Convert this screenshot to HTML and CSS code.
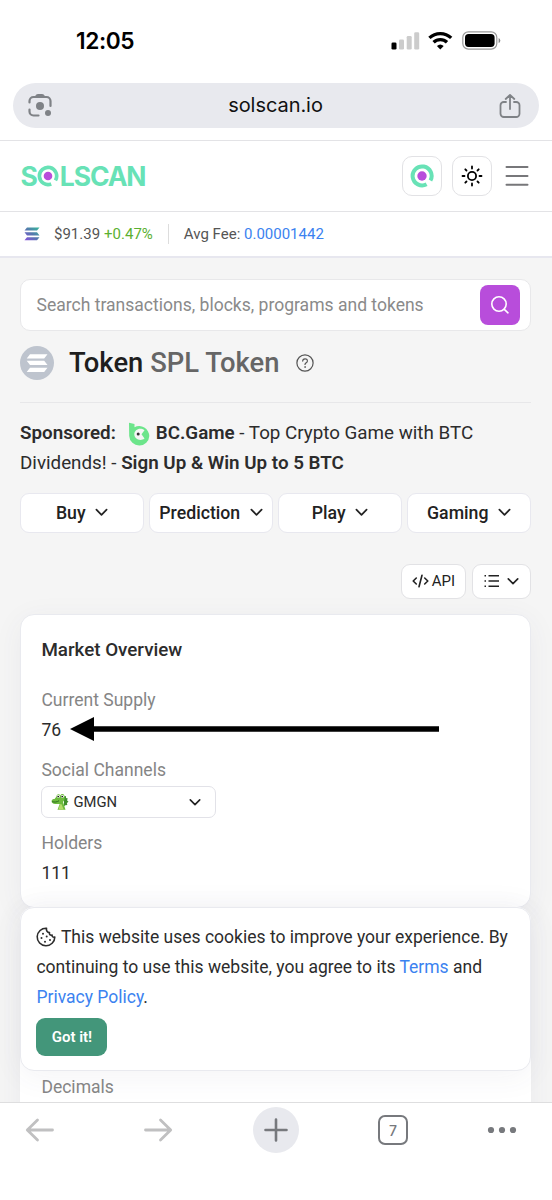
FILE: index.html
```
<!DOCTYPE html>
<html lang="en">
<head>
<meta charset="utf-8">
<meta name="viewport" content="width=device-width, initial-scale=1">
<title>Solscan</title>
<link rel="stylesheet" href="styles.css">
</head>
<body>
<div class="phone">
  <div class="status">
    <span class="time">12:05</span>
    <svg class="status-icons" width="112" height="24" viewBox="0 0 112 24">
      <rect x="1.500" y="14.500" width="5" height="7" rx="1.300" fill="#000"/>
      <g fill="#ccc"><rect x="9" y="11.500" width="5" height="10" rx="1.300"/><rect x="16.700" y="8" width="5" height="13.500" rx="1.300"/><rect x="24.200" y="4.200" width="5" height="17.300" rx="1.300"/></g>
      <g fill="none" stroke="#000" stroke-width="3.300"><path d="M39.400 9.900a16 16 0 0 1 21.800 0"/><path d="M43.600 14.300a9.600 9.600 0 0 1 13.400 0"/></g>
      <path d="M46.900 18a5 5 0 0 1 6.800 0L50.300 21.500z" fill="#000"/>
      <rect x="72.800" y="3.900" width="34" height="17.200" rx="5.600" fill="none" stroke="#999" stroke-width="1.200"/>
      <rect x="75" y="6.100" width="29.600" height="12.800" rx="3.600" fill="#000"/>
      <path d="M108.600 9.900v5.200q1.700-.6 1.700-2.600t-1.700-2.600" fill="#888"/>
    </svg>
  </div>
  <div class="address">
    <svg width="26" height="26" viewBox="0 0 26 26" fill="none" stroke="#7f8286" stroke-width="2.200" stroke-linecap="round"><path d="M2.500 9.500V8a4 4 0 0 1 4-4h13a4 4 0 0 1 4 4v5M2.500 16.500v2a4 4 0 0 0 4 4h5"/><path d="M9 2.500q.4-1 1.500-1h5q1.100 0 1.500 1l1 2H8z" fill="#7f8286" stroke-width="1"/><circle cx="13" cy="13" r="4" fill="#7f8286" stroke="none"/><circle cx="21" cy="20" r="3" fill="#7f8286" stroke="none"/></svg>
    <span class="host">solscan.io</span>
    <svg width="24" height="26" viewBox="0 0 24 26" fill="none" stroke="#7f8286" stroke-width="1.800" stroke-linecap="round" stroke-linejoin="round"><path d="M8 9H5.800a3.300 3.300 0 0 0-3.300 3.300v8.400A3.300 3.300 0 0 0 5.800 24h12.400a3.300 3.300 0 0 0 3.300-3.300v-8.400A3.300 3.300 0 0 0 18.200 9H16M12 16V2M7.700 6 12 1.900 16.300 6"/></svg>
  </div>
  <header class="header">
    <div class="logo">
      <span class="logo-s">S</span>
      <svg class="logo-o" width="22" height="22" viewBox="0 0 24 24"><path d="M20.100 16.800A9.400 9.400 0 1 0 15.500 20.700" fill="none" stroke="#68e2b6" stroke-width="4"/><circle cx="12" cy="12" r="4.700" fill="#b84ddb"/></svg>
      <span class="logo-rest">LSCAN</span>
    </div>
    <div class="square">
      <svg width="24" height="24" viewBox="0 0 24 24"><path d="M20.400 16.600A9.500 9.500 0 1 0 16.600 20.300" fill="none" stroke="#68e2b6" stroke-width="4"/><circle cx="12" cy="12" r="4.700" fill="#b84ddb"/></svg>
    </div>
    <div class="square">
      <svg width="24" height="24" viewBox="0 0 24 24" fill="none" stroke="#000" stroke-width="1.800" stroke-linecap="round"><circle cx="12" cy="12" r="4.100"/><path d="M12 2.500v2M12 19.500v2M2.500 12h2M19.500 12h2M5.300 5.300l1.200 1.200M17.500 17.500l1.200 1.200M5.300 18.700l1.200-1.200M17.500 6.500l1.200-1.200"/></svg>
    </div>
    <svg class="menu" width="24" height="24" viewBox="0 0 24 24" stroke="#77777a" stroke-width="2" stroke-linecap="round"><path d="M1.500 3h21M1.500 12h21M1.500 20.700h21"/></svg>
  </header>
  <div class="ticker">
    <svg width="16" height="14" viewBox="0 0 16 14"><defs><linearGradient id="sol" x1="0" y1="1" x2="1" y2="0"><stop stop-color="#8750dc"/><stop offset=".5" stop-color="#5577ad"/><stop offset="1" stop-color="#35b99b"/></linearGradient></defs><path fill="url(#sol)" d="M3 .5h12.500L13 3.600H.5zM.5 5.300H13l2.500 3.100H3zM3 10.200h12.500L13 13.300H.5z"/></svg>
    <span class="price">$91.39</span><span class="up">+0.47%</span>
    <span class="sep"></span>
    <span class="fee">Avg Fee: <a>0.00001442</a></span>
  </div>
  <main class="main">
    <div class="search"><span>Search transactions, blocks, programs and tokens</span>
      <div class="search-btn"><svg width="20" height="20" viewBox="0 0 20 20" fill="none" stroke="#fff" stroke-width="1.600" stroke-linecap="round"><circle cx="9" cy="9" r="7.200"/><path d="m14.300 14.300 3.700 3.500"/></svg></div>
    </div>
    <div class="title">
      <svg width="34" height="34" viewBox="0 0 34 34"><circle cx="17" cy="17" r="17" fill="#bec4ce"/><path fill="#fff" d="M10 8.200h17.500l-3.300 4.300H6.700zM6.700 14.800h17.500l3.300 4.300H10zM10 21.700h17.500L24.200 26H6.700z"/></svg>
      <h1>Token <span>SPL Token</span></h1>
      <svg class="help" width="18" height="18" viewBox="0 0 18 18" fill="none" stroke="#555" stroke-width="1.200" stroke-linecap="round"><circle cx="9" cy="9" r="8.100"/><path d="M6.700 7.100c0-3 4.700-3 4.700-.2 0 1.800-2.400 1.800-2.400 3.600"/><circle cx="9" cy="13" r=".5" fill="#555" stroke-width=".6"/></svg>
    </div>
    <div class="sponsor">
      <div class="line"><b>Sponsored:</b><svg width="22" height="24" viewBox="0 0 22 24"><path fill="#6ce58b" d="M1 .8 6.500 2v3.200A10.200 10.200 0 0 1 21.300 14 10 10 0 0 1 11.500 23.500 10 10 0 0 1 1.200 14z"/><path fill="#f5f5f5" d="m16.500 8.200-3 4 3 4.300c-4.500 3.500-10.200 0-10.200-4.300 0-4.500 5.700-7.500 10.200-4"/><circle cx="10.200" cy="12" r="1.500" fill="#333"/></svg><b>BC.Game</b><span>&nbsp;- Top Crypto Game with BTC</span></div>
      <div class="line">Dividends! -&nbsp;<b>Sign Up &amp; Win Up to 5 BTC</b></div>
    </div>
    <div class="promos">
      <div class="promo">Buy<svg class="chev" viewBox="0 0 14 9"><path d="m1.500 1.500 5.500 5.500 5.500-5.500"/></svg></div>
      <div class="promo">Prediction<svg class="chev" viewBox="0 0 14 9"><path d="m1.500 1.500 5.500 5.500 5.500-5.500"/></svg></div>
      <div class="promo">Play<svg class="chev" viewBox="0 0 14 9"><path d="m1.500 1.500 5.500 5.500 5.500-5.500"/></svg></div>
      <div class="promo">Gaming<svg class="chev" viewBox="0 0 14 9"><path d="m1.500 1.500 5.500 5.500 5.500-5.500"/></svg></div>
    </div>
    <div class="tools">
      <div class="tool api"><svg width="17" height="14" viewBox="0 0 17 14" fill="none" stroke="#222" stroke-width="1.600" stroke-linecap="round" stroke-linejoin="round"><path d="M4.300 4 1.200 7l3.100 3M12.700 4l3.100 3-3.100 3M10 1.200 7 12.800"/></svg><span>API</span></div>
      <div class="tool list"><svg width="16" height="14" viewBox="0 0 16 14" stroke="#222" stroke-width="1.400"><path d="M4.500 1.700H15M4.500 7H15M4.500 12.300H15M.5 1.700H2M.5 7H2M.5 12.300H2"/></svg><svg class="chev small" viewBox="0 0 14 9"><path d="m1.500 1.500 5.500 5.500 5.500-5.500"/></svg></div>
    </div>
    <section class="card overview">
      <h2>Market Overview</h2>
      <div class="label supply">Current Supply</div>
      <div class="value">76
        <svg class="arrow" width="370" height="24" viewBox="0 0 370 24"><path d="M0 12 24 0v9.200h345v5.600H24V24z"/></svg>
      </div>
      <div class="label social">Social Channels</div>
      <div class="select">
        <svg width="18" height="18" viewBox="0 0 18 18"><path fill="#3f8f2c" d="M13 3.500 15 3v2l1.800.5-.8 1.800 1.500 1.400-1.600 1.200.4 2-2 .3-1.300 1z"/><path fill="#6dbb3d" d="M5.500 3.500C5.500.6 9 .6 9.300 2.700 10 .3 13.600.6 13.500 3.600c.6 2-.1 4.200-1.500 5.500l2.500 7.700h-8L8.700 11H4.200C1.800 11 .4 9.600.6 8c.2-1.400 1.400-2 2.900-2z"/><path fill="#b3dc6a" d="M9 11.200h1.600l2 5.300H7.500z"/><circle cx="7.400" cy="3.500" r="1.400" fill="#fff"/><circle cx="11.400" cy="3.500" r="1.400" fill="#fff"/><circle cx="7.200" cy="3.600" r=".8"/><circle cx="11.200" cy="3.600" r=".8"/><path d="M1.200 8.600c2 .8 5 .6 6.800-.9" fill="none" stroke="#24631d" stroke-width=".9"/></svg>
        <span>GMGN</span><svg class="chev small" viewBox="0 0 14 9"><path d="m1.500 1.500 5.500 5.500 5.500-5.500"/></svg>
      </div>
      <div class="label holders">Holders</div>
      <div class="value">111</div>
    </section>
    <section class="next">
      <div class="card cookie">
        <div class="ck"><svg width="20" height="20" viewBox="0 0 20 20" fill="none" stroke="#2c2c2c" stroke-width="1.600" stroke-linejoin="round"><path d="M10.500 1.200a8.800 8.800 0 1 0 8.300 8.800c-1.500.7-2.900-.3-2.700-1.900-2 .5-3.200-.8-2.600-2.500C11.300 5.300 10 3.700 10.500 1.200z"/><g fill="#2c2c2c" stroke="none"><circle cx="7" cy="6.700" r="1"/><circle cx="10.700" cy="9.500" r="1"/><circle cx="5.500" cy="11" r="1"/><circle cx="9" cy="14.700" r="1"/><circle cx="14" cy="13" r="1"/></g></svg><span>This website uses cookies to improve your experience. By</span></div>
        <div class="ck"><span>continuing to use this website, you agree to its <a>Terms</a> and</span></div>
        <div class="ck"><span><a>Privacy Policy</a>.</span></div>
        <div class="got">Got it!</div>
      </div>
      <div class="label decimals">Decimals</div>
    </section>
  </main>
  <nav class="nav">
    <svg class="back" width="30" height="26" viewBox="0 0 30 26" fill="none" stroke="#c0c0c1" stroke-width="2.800" stroke-linecap="round" stroke-linejoin="round"><path d="M27.500 13H2.500M12.500 3 2.300 13l10.200 10"/></svg>
    <svg class="forward" width="30" height="26" viewBox="0 0 30 26" fill="none" stroke="#c0c0c1" stroke-width="2.800" stroke-linecap="round" stroke-linejoin="round"><path d="M2.500 13h25M17.500 3l10.200 10-10.200 10"/></svg>
    <div class="plus"><svg width="24" height="24" viewBox="0 0 24 24" stroke="#77797d" stroke-width="2.600" stroke-linecap="round"><path d="M1.500 12h21M12 1.500v21"/></svg></div>
    <div class="tabs">7</div>
    <svg class="more" width="30" height="8" viewBox="0 0 30 8" fill="#77797d"><circle cx="4" cy="4" r="3.100"/><circle cx="15" cy="4" r="3.100"/><circle cx="26" cy="4" r="3.100"/></svg>
  </nav>
</div>
</body>
</html>
```
FILE: styles.css
```
* { box-sizing: border-box; }
body { margin: 0; background: #fff; font-family: Roboto, sans-serif; color: #2c2c2c; white-space: nowrap; }
svg { flex: none; display: block; }
a { color: #3b82f0; }
b { font-weight: 600; }
h1, h2 { margin: 0; font-weight: 500; }
.phone { width: 552px; height: 1200px; overflow: hidden; display: flex; flex-direction: column; }
.status { height: 83px; flex: none; display: flex; justify-content: space-between; padding: 28px 50px 0 76px; font-family: Inter, sans-serif; }
.time { font-size: 22.700px; font-weight: 600; line-height: 26px; color: #000; letter-spacing: -.4px; }
.address { height: 45px; flex: none; margin: 0 13px; padding: 0 17px 0 14px; border-radius: 23px; background: #e8e9ee; display: flex; align-items: center; justify-content: space-between; }
.host { font-family: Inter, sans-serif; font-size: 20px; color: #111; letter-spacing: -.05px; padding-bottom: 2px; }
.header { height: 72px; flex: none; margin-top: 12px; border-top: 1px solid #e3e3e6; border-bottom: 1px solid #e3e3e6; padding: 0 23px 0 20.500px; display: flex; align-items: center; }
.logo { width: 126px; margin-right: auto; display: flex; align-items: center; color: #68e2b6; font: 700 26.500px/30px Inter, sans-serif; letter-spacing: -1.100px; }
.logo-o { margin: 0 .5px 0 .5px; }
.square { width: 40px; height: 40px; border: 1px solid #e2e2e5; border-radius: 10px; display: flex; align-items: center; justify-content: center; margin-right: 10px; }
.menu { margin-left: 3px; }
.ticker { height: 46px; flex: none; border-bottom: 2px solid #e7e7ef; padding: 0 24px; display: flex; align-items: center; font-size: 15px; color: #555; }
.price { margin-left: 14px; }
.up { margin-left: 4px; color: #5bb030; }
.sep { width: 1px; height: 20px; background: #ddd; margin: 0 15px; }
.main { flex: 1; min-height: 0; overflow: hidden; background: #f5f5f5; padding: 21px 21px 0 20px; }
.search { height: 52px; background: #fff; border: 1px solid #e8e8ea; border-radius: 10px; padding: 0 10px 0 15.500px; display: flex; align-items: center; justify-content: space-between; font-size: 17.550px; color: #8a8a8a; }
.search-btn { width: 40px; height: 40px; border-radius: 8px; background: #b84ddb; display: flex; align-items: center; justify-content: center; }
.title { height: 72px; border-bottom: 1px solid #e7e7e9; display: flex; align-items: center; padding-bottom: 8px; }
h1 { font-size: 27.400px; margin-left: 15px; color: #1e1e1e; }
h1 span { color: #666; }
.help { margin-left: 17px; }
.sponsor { padding-top: 15px; font-size: 18.800px; }
.line { height: 30px; display: flex; align-items: center; }
.line svg { margin: 1px 6px 0 12px; }
.promos { display: grid; grid-template-columns: repeat(4, 1fr); gap: 5px; margin-top: 15px; }
.promo { height: 40px; border: 1px solid #e8e8ef; border-radius: 9px; background: #fff; display: flex; align-items: center; justify-content: center; padding-bottom: 1px; font-size: 17.700px; font-weight: 500; color: #222; }
.chev { width: 13px; height: 9px; margin-left: 9.500px; fill: none; stroke: #222; stroke-width: 1.900; stroke-linecap: round; stroke-linejoin: round; }
.tools { display: flex; justify-content: flex-end; gap: 6px; margin-top: 31px; }
.tool { height: 35px; border: 1px solid #e2e2e5; border-radius: 9px; background: #fff; display: flex; align-items: center; justify-content: center; padding-bottom: 1px; font-size: 15px; color: #222; }
.api { width: 65px; gap: 3px; }
.list { width: 59px; padding-right: 1px; }
.small { width: 12px; margin-left: 7px; }
.card { background: #fff; border: 1px solid #e9eaef; border-radius: 14px; box-shadow: 0 6px 30px rgba(60, 65, 100, .06); }
.overview { height: 294px; margin-top: 15px; padding: 23px 20px 0 20.400px; }
h2 { font-size: 18.800px; line-height: 24px; }
.label { font-size: 17.550px; line-height: 24px; color: #858585; }
.value { font-size: 17.550px; line-height: 24px; margin-top: 6px; position: relative; }
.arrow { position: absolute; left: 28.600px; top: -1px; }
.supply { margin-top: 26px; }
.social { margin-top: 16px; }
.select { width: 175px; height: 32px; border: 1px solid #e2e2e8; border-radius: 7px; margin-top: 4px; padding: 0 14px 0 9px; display: flex; align-items: center; font-size: 14.800px; }
.select span { margin-left: 4px; margin-right: auto; }
.holders { margin-top: 13px; }
.next { height: 300px; margin-top: -1px; background: #fff; box-shadow: 0 0 30px rgba(60, 65, 100, .06); border-radius: 14px; position: relative; }
.cookie { height: 164px; padding: 14px 15px 14px 15.400px; }
.ck { height: 30px; display: flex; align-items: center; padding-bottom: 1px; font-size: 17.530px; }
.ck svg { margin-right: 4.500px; }
.got { width: 71px; height: 38px; border-radius: 9px; margin-top: 6px; background: #43967a; color: #fff; font-size: 15px; font-weight: 600; display: flex; align-items: center; justify-content: center; }
.decimals { padding: 4px 21.400px; }
.nav { height: 98px; flex: none; background: #fff; border-top: 1px solid #dededf; padding: 4px 0 0 25px; display: flex; align-items: flex-start; }
.back, .forward { margin-top: 10px; }
.forward { margin-left: 88px; }
.plus { width: 46px; height: 46px; margin-left: 80px; border-radius: 50%; background: #e8e9ee; display: flex; align-items: center; justify-content: center; }
.tabs { width: 30px; height: 30px; margin: 8px 0 0 79px; border: 2.500px solid #77797d; border-radius: 7px; display: flex; align-items: center; justify-content: center; font: 500 14px Inter, sans-serif; color: #77797d; }
.more { margin: 19px 0 0 79px; }
```
